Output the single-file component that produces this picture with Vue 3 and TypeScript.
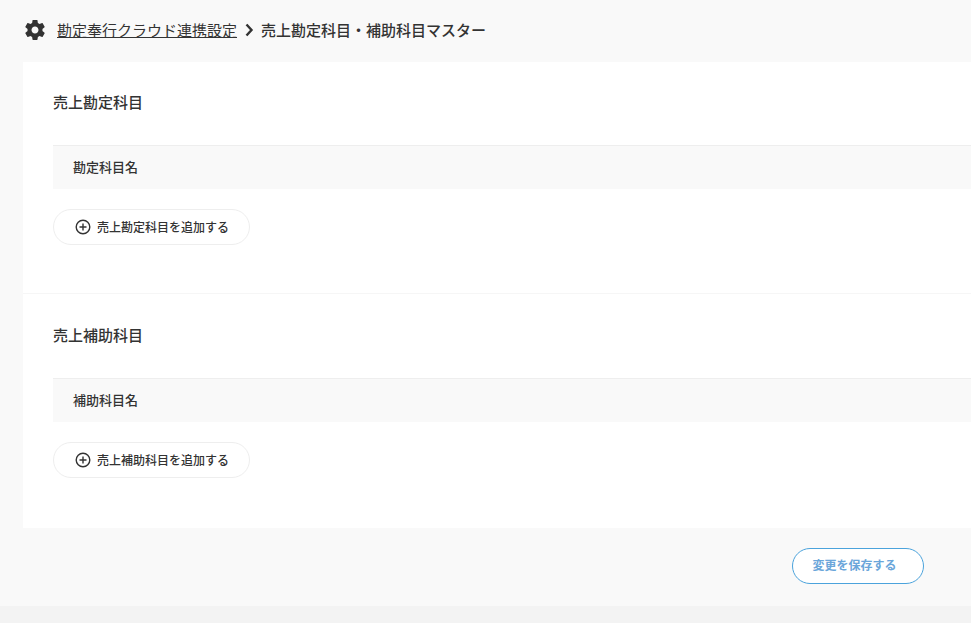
<script setup lang="ts">
const sections = [
  { title: '売上勘定科目', column: '勘定科目名', add: '売上勘定科目を追加する' },
  { title: '売上補助科目', column: '補助科目名', add: '売上補助科目を追加する' },
];
</script>

<template>
  <div class="page">
    <div class="content">
      <header class="crumbs">
        <svg class="gear" viewBox="0 0 24 24" width="24" height="24">
          <path
            fill="#333"
            d="M19.43 12.98c.04-.32.07-.64.07-.98s-.03-.66-.07-.98l2.11-1.65c.19-.15.24-.42.12-.64l-2-3.46c-.12-.22-.39-.3-.61-.22l-2.49 1c-.52-.4-1.08-.73-1.69-.98l-.38-2.65C14.46 2.18 14.25 2 14 2h-4c-.25 0-.46.18-.49.42l-.38 2.65c-.61.25-1.17.59-1.69.98l-2.49-1c-.23-.09-.49 0-.61.22l-2 3.46c-.13.22-.07.49.12.64l2.11 1.65c-.04.32-.07.65-.07.98s.03.66.07.98l-2.11 1.65c-.19.15-.24.42-.12.64l2 3.46c.12.22.39.3.61.22l2.49-1c.52.4 1.08.73 1.69.98l.38 2.65c.03.24.24.42.49.42h4c.25 0 .46-.18.49-.42l.38-2.65c.61-.25 1.17-.59 1.69-.98l2.49 1c.23.09.49 0 .61-.22l2-3.46c.12-.22.07-.49-.12-.64l-2.11-1.65zM12 15.500c-1.930 0-3.500-1.570-3.500-3.500s1.570-3.500 3.500-3.500 3.500 1.570 3.500 3.500-1.570 3.500-3.500 3.500z"
          />
        </svg>
        <a class="crumb-link" href="#">勘定奉行クラウド連携設定</a>
        <svg class="chevron" viewBox="0 0 10 14" width="10" height="14">
          <path d="M2.500 1.500 7.500 7l-5 5.500" fill="none" stroke="#333" stroke-width="2.400" />
        </svg>
        <span class="crumb-current">売上勘定科目・補助科目マスター</span>
      </header>

      <main class="card">
        <section v-for="s in sections" :key="s.title" class="section">
          <h2 class="section-title">{{ s.title }}</h2>
          <div class="table-head">{{ s.column }}</div>
          <button type="button" class="add-btn">
            <svg viewBox="0 0 16 16" width="16" height="16">
              <circle cx="8" cy="8" r="6.800" fill="none" stroke="#333" stroke-width="1.400" />
              <path d="M8 4.500v7M4.500 8h7" fill="none" stroke="#333" stroke-width="1.400" />
            </svg>
            <span class="add-label">{{ s.add }}</span>
          </button>
        </section>
      </main>

      <div class="actions">
        <button type="button" class="save-btn">変更を保存する</button>
      </div>
    </div>
    <div class="bottom"></div>
  </div>
</template>

<style scoped>
.page {
  height: 623px;
  overflow: hidden;
  display: flex;
  flex-direction: column;
  background: #f3f3f3;
  color: #333;
  font-family: "Noto Sans CJK JP", "Noto Sans", sans-serif;
}
.content {
  height: 606px;
  padding-left: 23px;
  box-sizing: border-box;
  background: #f9f9f9;
}
.crumbs {
  height: 60px;
  padding-bottom: 2px;
  display: flex;
  align-items: center;
  font-size: 15px;
}
.gear {
  margin-right: 10px;
}
.crumb-link {
  color: #333;
  text-decoration: underline;
  padding-bottom: 2px;
}
.chevron {
  margin: 0 7px;
}
.crumb-current {
  font-weight: 500;
  padding-bottom: 2px;
}
.card {
  height: 466px;
  background: #fff;
}
.section {
  height: 232px;
  box-sizing: border-box;
  padding: 28px 0 0 30px;
  border-bottom: 1px solid #f6f6f6;
}
.section:last-child {
  border-bottom: 0;
  height: 234px;
  padding-top: 29px;
}
.section-title {
  margin: 0 0 31px;
  font-size: 15px;
  line-height: 24px;
  font-weight: 500;
}
.table-head {
  height: 44px;
  box-sizing: border-box;
  border-top: 1px solid #eee;
  padding: 0 0 2px 20px;
  display: flex;
  align-items: center;
  font-size: 13px;
  font-weight: 500;
  background: #f9f9f9;
}
.add-btn {
  margin-top: 20px;
  width: 197px;
  height: 36px;
  box-sizing: border-box;
  display: flex;
  align-items: center;
  gap: 6px;
  padding: 0 0 0 21px;
  border: 1px solid #eee;
  border-radius: 18px;
  background: #fff;
  color: #333;
  font-family: inherit;
  font-size: 12px;
  font-weight: 500;
}
.add-label {
  padding-bottom: 2px;
}
.actions {
  display: flex;
  justify-content: flex-end;
  padding: 20px 47px 0 0;
}
.save-btn {
  width: 132px;
  height: 36px;
  padding: 0 7px 4px 0;
  border: 1px solid #4ba3dc;
  border-radius: 18px;
  background: #fff;
  color: #6ba6da;
  font-family: inherit;
  font-size: 12px;
  font-weight: 700;
}
.bottom {
  flex: 1;
}
</style>

<style>
html,
body {
  margin: 0;
  overflow: hidden;
}
</style>
